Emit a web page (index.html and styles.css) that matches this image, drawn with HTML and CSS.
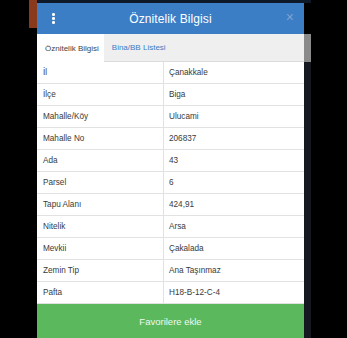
FILE: index.html
```html
<!DOCTYPE html>
<html>
<head>
<meta charset="utf-8">
<link rel="stylesheet" href="styles.css">
</head>
<body>
<div class="backdrop-orange"></div>
<div class="backdrop-top"></div>
<div class="backdrop-scroll"></div>
<div class="backdrop-edge"></div>
<div class="modal">
  <div class="header">
    <span class="kebab"><i></i><i></i><i></i></span>
    <span class="title">Öznitelik Bilgisi</span>
    <span class="close">×</span>
  </div>
  <div class="tabs">
    <div class="tab active">Öznitelik Bilgisi</div>
    <div class="tab link">Bina/BB Listesi</div>
  </div>
  <div class="table">
    <div class="row"><div class="k">İl</div><div class="v">Çanakkale</div></div>
    <div class="row"><div class="k">İlçe</div><div class="v">Biga</div></div>
    <div class="row"><div class="k">Mahalle/Köy</div><div class="v">Ulucami</div></div>
    <div class="row"><div class="k">Mahalle No</div><div class="v">206837</div></div>
    <div class="row"><div class="k">Ada</div><div class="v">43</div></div>
    <div class="row"><div class="k">Parsel</div><div class="v">6</div></div>
    <div class="row"><div class="k">Tapu Alanı</div><div class="v">424,91</div></div>
    <div class="row"><div class="k">Nitelik</div><div class="v">Arsa</div></div>
    <div class="row"><div class="k">Mevkii</div><div class="v">Çakalada</div></div>
    <div class="row"><div class="k">Zemin Tip</div><div class="v">Ana Taşınmaz</div></div>
    <div class="row"><div class="k">Pafta</div><div class="v">H18-B-12-C-4</div></div>
  </div>
  <div class="btn">Favorilere ekle</div>
</div>
</body>
</html>
```

FILE: styles.css
```css
html, body {
  margin: 0;
  padding: 0;
  background: #000;
  width: 347px;
  height: 338px;
  overflow: hidden;
  font-family: "Liberation Sans", Arial, sans-serif;
}
.backdrop-orange {
  position: absolute;
  left: 29px;
  top: 0;
  width: 8px;
  height: 28px;
  background: #8a3a1c;
}
.backdrop-top {
  position: absolute;
  left: 37px;
  top: 0;
  width: 274px;
  height: 3px;
  background: #0d1828;
}
.backdrop-scroll {
  position: absolute;
  left: 304px;
  top: 34px;
  width: 7px;
  height: 28px;
  background: #8a8a8a;
}
.backdrop-edge {
  position: absolute;
  left: 304px;
  top: 62px;
  width: 7px;
  height: 276px;
  background: #15181e;
}
.modal {
  position: relative;
  margin: 3px 0 0 37px;
  width: 267px;
  display: flex;
  flex-direction: column;
  background: #fff;
}
.header {
  height: 31px;
  background: #3b7ec6;
  display: flex;
  align-items: center;
  justify-content: center;
  position: relative;
}
.title {
  color: #fff;
  font-size: 12px;
  letter-spacing: 0.1px;
}
.kebab {
  position: absolute;
  left: 15px;
  top: 10px;
  display: flex;
  flex-direction: column;
  gap: 1.6px;
}
.kebab i {
  display: block;
  width: 2.6px;
  height: 2.6px;
  border-radius: 50%;
  background: #fff;
}
.close {
  position: absolute;
  right: 10px;
  top: 7px;
  color: #7ea3d0;
  font-size: 14px;
  line-height: 14px;
}
.tabs {
  height: 28px;
  background: #efefef;
  display: flex;
  align-items: stretch;
  border-bottom: 1px solid #dcdcdc;
  box-sizing: border-box;
}
.tab {
  font-size: 8px;
  display: flex;
  align-items: center;
  white-space: nowrap;
}
.tab.active {
  background: #fff;
  color: #444;
  padding: 0 5px 0 8px;
  margin-bottom: -1px;
}
.tab.link {
  color: #3b7ec6;
  padding-left: 8px;
}
.table {
  display: flex;
  flex-direction: column;
}
.row {
  height: 22px;
  display: grid;
  grid-template-columns: 127px 1fr;
  border-bottom: 1px solid #e2e2e2;
  box-sizing: border-box;
  font-size: 8.2px;
  color: #3a3a3a;
}
.k {
  padding-left: 6px;
  display: flex;
  align-items: center;
  border-right: 1px solid #e2e2e2;
}
.v {
  padding-left: 5px;
  display: flex;
  align-items: center;
}
.btn {
  height: 34px;
  background: #5cb85c;
  color: #eef8ee;
  font-size: 9.5px;
  display: flex;
  align-items: center;
  justify-content: center;
}
```
